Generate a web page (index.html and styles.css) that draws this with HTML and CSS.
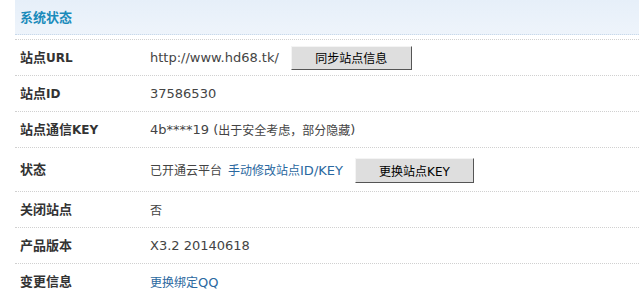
FILE: index.html
```html
<!DOCTYPE html>
<html lang="zh-CN">
<head>
<meta charset="utf-8">
<title>系统状态</title>
<link rel="stylesheet" href="styles.css">
</head>
<body>
<div class="panel">
  <div class="panel-head"><span class="panel-title">系统状态</span></div>
  <div class="rows">
    <div class="row">
      <div class="label">站点<span class="en">URL</span></div>
      <div class="value"><span class="en">http://www.hd68.tk/</span><button class="btn">同步站点信息</button></div>
    </div>
    <div class="row">
      <div class="label">站点<span class="en">ID</span></div>
      <div class="value"><span class="en">37586530</span></div>
    </div>
    <div class="row">
      <div class="label">站点通信<span class="en">KEY</span></div>
      <div class="value"><span class="en">4b****19 (</span>出于安全考虑，部分隐藏<span class="en">)</span></div>
    </div>
    <div class="row row-tall">
      <div class="label">状态</div>
      <div class="value">已开通云平台 <a class="link" href="#">手动修改站点<span class="en">ID/KEY</span></a><button class="btn btn-key">更换站点<span class="en-btn">KEY</span></button></div>
    </div>
    <div class="row">
      <div class="label">关闭站点</div>
      <div class="value">否</div>
    </div>
    <div class="row">
      <div class="label">产品版本</div>
      <div class="value"><span class="en">X3.2 20140618</span></div>
    </div>
    <div class="row">
      <div class="label">变更信息</div>
      <div class="value"><a class="link link-first" href="#">更换绑定<span class="en">QQ</span></a></div>
    </div>
  </div>
</div>
</body>
</html>
```

FILE: styles.css
```css
html, body {
  margin: 0;
  padding: 0;
  background: #fff;
}
body {
  font-family: "DejaVu Sans", "Noto Sans CJK SC", sans-serif;
  font-size: 12px;
  color: #444;
}
.en {
  font-size: 13px;
}
.panel {
  padding-left: 15px;
}
.panel-head {
  height: 34px;
  background: linear-gradient(#e6eff9, #eef4fb);
  border-bottom: 1px dotted #c9d9ea;
  display: flex;
  align-items: center;
  padding-left: 5px;
}
.panel-title {
  font-weight: bold;
  color: #1a8bbb;
  font-size: 13px;
  margin-top: -2px;
}
.rows {
  margin-top: 4px;
}
.row {
  display: flex;
  align-items: center;
  height: 35px;
  border-top: 1px dotted #d0d0d0;
}
.row-tall {
  height: 43px;
}
.label {
  width: 135px;
  box-sizing: border-box;
  padding-left: 5px;
  font-size: 13px;
  font-weight: bold;
  color: #333;
  flex-shrink: 0;
  margin-top: -2px;
}
.label .en {
  font-size: 12px;
}
.value {
  display: flex;
  align-items: center;
  white-space: nowrap;
  color: #444;
}
.link {
  color: #2a68a0;
  text-decoration: none;
  margin-left: 6px;
}
.link-first {
  margin-left: 0;
}
.btn {
  margin-left: 12px;
  width: 121px;
  height: 24px;
  padding: 0;
  font-family: "Noto Sans CJK SC", "DejaVu Sans", sans-serif;
  font-size: 12px;
  color: #000;
  background: #dedede;
  border-style: solid;
  border-width: 1px;
  border-color: #f4f4f4 #555 #555 #f4f4f4;
}
.btn-key {
  width: 119px;
  height: 25px;
  margin-top: 1px;
}
.en-btn {
  font-family: "DejaVu Sans", sans-serif;
  font-size: 12px;
}
```
